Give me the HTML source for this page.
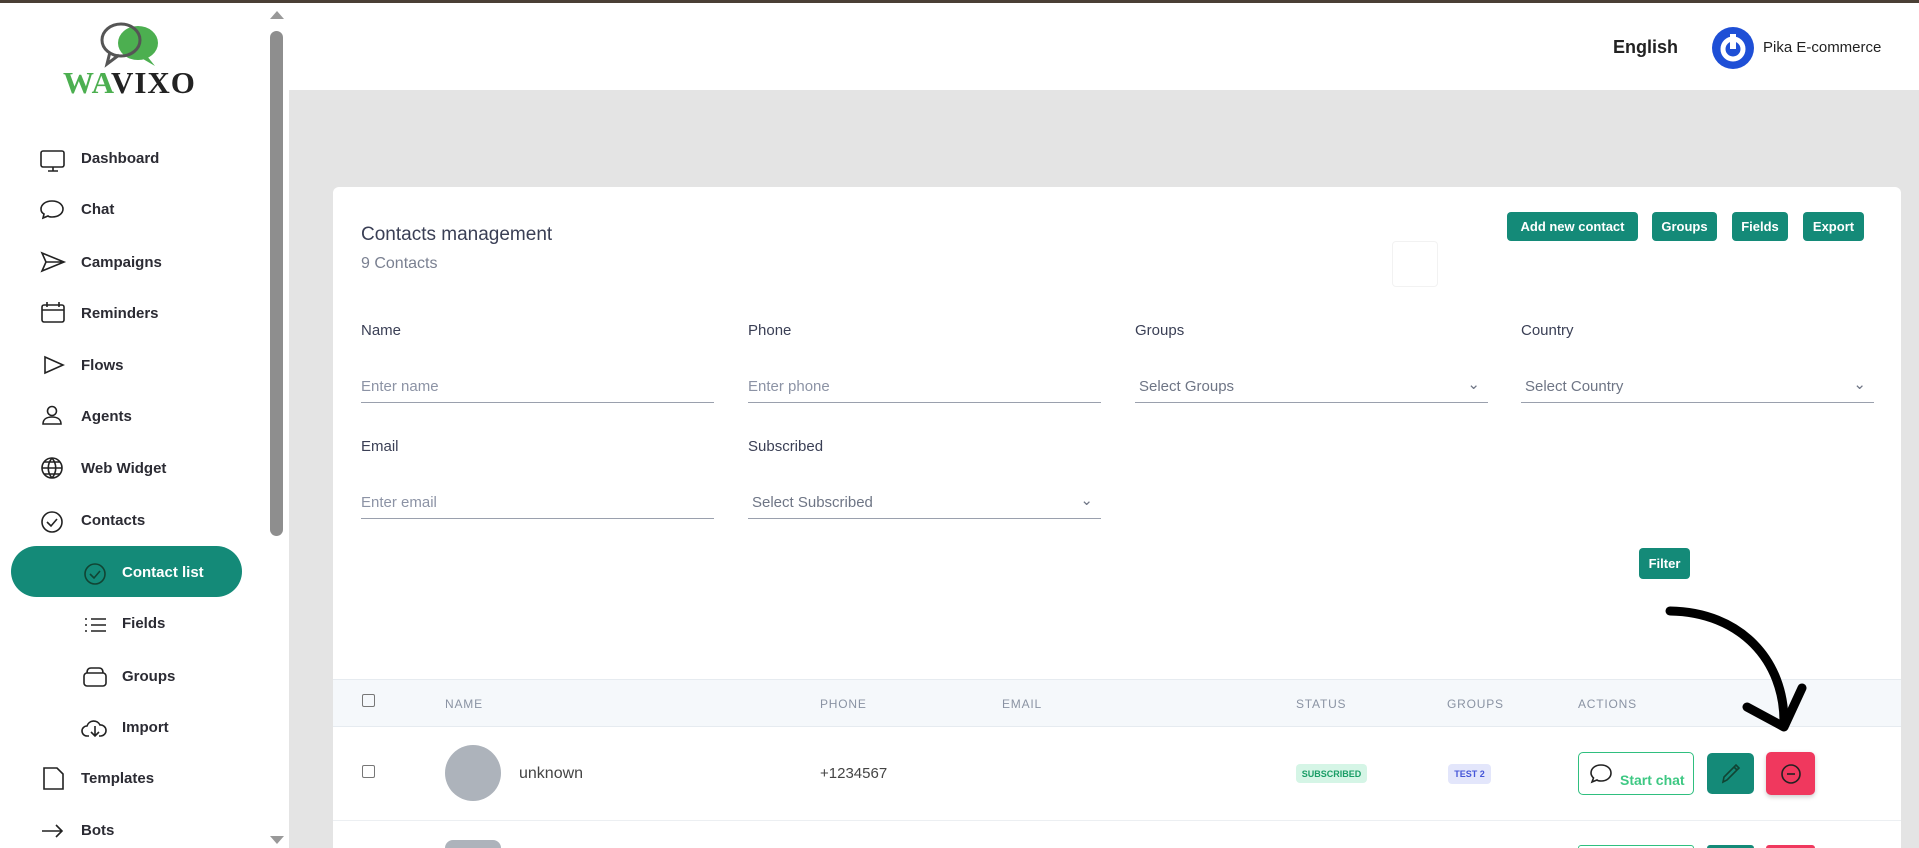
<!DOCTYPE html>
<html style="width:1919px;height:848px;overflow:hidden"><head><meta charset="utf-8"><style>
*{box-sizing:border-box;margin:0;padding:0}
body{width:1919px;height:848px;overflow:hidden;font-family:"Liberation Sans",sans-serif;background:#e4e4e4;position:relative;color:#222}
.abs{position:absolute}
#top{left:0;top:0;width:1919px;height:3px;background:#4a3f35}
#side{left:0;top:3px;width:289px;height:845px;background:#fff}
.nav{position:absolute;font-weight:bold;font-size:15px;color:#2b2b33;white-space:nowrap}
#hdr{left:289px;top:3px;width:1630px;height:87px;background:#fff}
#card{left:333px;top:187px;width:1568px;height:661px;background:#fff;border-radius:6px 6px 0 0}
.btn{position:absolute;background:#148a78;color:#fff;font-size:13px;font-weight:bold;border-radius:4px;display:flex;align-items:center;justify-content:center}
.lbl{position:absolute;font-size:15px;color:#3a3f55}
.inp{position:absolute;font-size:15px;color:#8c93a5;width:353px;border-bottom:1px solid #9aa0ad;height:25px}
.th{position:absolute;top:697px;font-size:12px;color:#8a93a3;letter-spacing:.8px}
</style></head><body>
<div id="top" class="abs"></div>
<div id="side" class="abs">
<svg class="abs" style="left:95px;top:17px" width="70" height="52" viewBox="0 0 70 52"><ellipse cx="43" cy="23" rx="20" ry="17" fill="#4caf50"/><path d="M52 36 L60 46 L48 39Z" fill="#4caf50"/><ellipse cx="26" cy="20" rx="19" ry="16" fill="none" stroke="#555" stroke-width="3"/><path d="M15 32 L12 44 L24 35" fill="none" stroke="#555" stroke-width="3"/></svg>
<div class="abs" style="left:63px;top:62px;font-family:'Liberation Serif',serif;font-weight:bold;font-size:31px;letter-spacing:1px"><span style="color:#4caf50">WA</span><span style="color:#222">VIXO</span></div>
<div class="abs" style="left:270px;top:28px;width:13px;height:505px;background:#8e8e8e;border-radius:7px"></div>
<div class="abs" style="left:270px;top:8px;width:0;height:0;border-left:7px solid transparent;border-right:7px solid transparent;border-bottom:8px solid #999"></div>
<div class="abs" style="left:270px;top:833px;width:0;height:0;border-left:7px solid transparent;border-right:7px solid transparent;border-top:8px solid #999"></div>
<div class="abs" style="left:11px;top:543px;width:231px;height:51px;background:#148a78;border-radius:26px"></div>
</div>
<svg class="abs" style="left:0;top:0" width="289" height="848" fill="none" stroke="#222" stroke-width="1.6">
<rect x="41" y="151" width="23" height="16" rx="2"/><path d="M48 171h10M53 167v4"/>
<path d="M52 201c7 0 11 4 11 8s-4 8-11 8c-2 0-3 0-4-1l-5 2 1-4c-2-1-3-3-3-5 0-4 4-8 11-8z"/>
<path d="M42 253l22 9-22 9 4-9z M46 262h18"/>
<rect x="42" y="305" width="22" height="17" rx="2"/><path d="M42 310h22M47 302v5M59 302v5"/>
<path d="M45 357l18 8-18 8z"/>
<circle cx="52" cy="411" r="4.5"/><path d="M43 424c0-5 4-7 9-7s9 2 9 7z"/>
<circle cx="52" cy="468" r="10"/><path d="M42 468h20M52 458c-5 6-5 14 0 20M52 458c5 6 5 14 0 20M44 462h16M44 474h16"/>
<circle cx="52" cy="522" r="10"/><path d="M47 522l4 4 6-7"/>
<circle cx="95" cy="574" r="10" stroke="#143" /><path d="M90 574l4 4 6-7" stroke="#143"/>
<path d="M85 619h2M85 625h2M85 631h2M91 619h15M91 625h15M91 631h15"/>
<rect x="84" y="673" width="22" height="13" rx="3"/><path d="M87 673c0-3 1-5 4-5h8c3 0 4 2 4 5"/>
<path d="M89 736h-2a5 5 0 0 1 0-10 7 7 0 0 1 13-1 5 5 0 0 1 1 11h-2M95 726v10M91 732l4 4 4-4"/>
<path d="M44 768h13l6 6v15h-19z"/>
<path d="M42 831h20M56 825l6 6-6 6"/>
</svg>
<div class="nav" style="left:81px;top:150px">Dashboard</div>
<div class="nav" style="left:81px;top:201px">Chat</div>
<div class="nav" style="left:81px;top:254px">Campaigns</div>
<div class="nav" style="left:81px;top:305px">Reminders</div>
<div class="nav" style="left:81px;top:357px">Flows</div>
<div class="nav" style="left:81px;top:408px">Agents</div>
<div class="nav" style="left:81px;top:460px">Web Widget</div>
<div class="nav" style="left:81px;top:512px">Contacts</div>
<div class="nav" style="left:122px;top:564px;color:#fff">Contact list</div>
<div class="nav" style="left:122px;top:615px">Fields</div>
<div class="nav" style="left:122px;top:668px">Groups</div>
<div class="nav" style="left:122px;top:719px">Import</div>
<div class="nav" style="left:81px;top:770px">Templates</div>
<div class="nav" style="left:81px;top:822px">Bots</div>

<div id="hdr" class="abs"></div>
<div class="abs" style="left:1613px;top:37px;font-size:18px;font-weight:bold;color:#222">English</div>
<svg class="abs" style="left:1712px;top:27px" width="42" height="42" viewBox="0 0 42 42"><circle cx="21" cy="21" r="21" fill="#1e4fd6"/><circle cx="21" cy="22" r="10" fill="none" stroke="#fff" stroke-width="5"/><rect x="18" y="7" width="6" height="15" fill="#fff"/></svg>
<div class="abs" style="left:1763px;top:39px;font-size:15px;color:#222">Pika E-commerce</div>

<div id="card" class="abs"></div>
<div class="abs" style="left:361px;top:224px;font-size:19px;color:#3a3f55">Contacts management</div>
<div class="abs" style="left:361px;top:255px;font-size:16px;color:#7a8091">9 Contacts</div>
<div class="abs" style="left:1392px;top:241px;width:46px;height:46px;border:1px solid #f2f2f2;border-radius:4px"></div>
<div class="btn" style="left:1507px;top:212px;width:131px;height:29px">Add new contact</div>
<div class="btn" style="left:1652px;top:212px;width:65px;height:29px">Groups</div>
<div class="btn" style="left:1732px;top:212px;width:56px;height:29px">Fields</div>
<div class="btn" style="left:1803px;top:212px;width:61px;height:29px">Export</div>

<div class="lbl" style="left:361px;top:322px">Name</div>
<div class="lbl" style="left:748px;top:322px">Phone</div>
<div class="lbl" style="left:1135px;top:322px">Groups</div>
<div class="lbl" style="left:1521px;top:322px">Country</div>
<div class="inp" style="left:361px;top:378px">Enter name</div>
<div class="inp" style="left:748px;top:378px">Enter phone</div>
<div class="inp" style="left:1135px;top:378px;padding-left:4px;color:#6e7585">Select Groups<span style="position:absolute;right:8px;top:-3px">⌄</span></div>
<div class="inp" style="left:1521px;top:378px;padding-left:4px;color:#6e7585">Select Country<span style="position:absolute;right:8px;top:-3px">⌄</span></div>
<div class="lbl" style="left:361px;top:438px">Email</div>
<div class="lbl" style="left:748px;top:438px">Subscribed</div>
<div class="inp" style="left:361px;top:494px">Enter email</div>
<div class="inp" style="left:748px;top:494px;padding-left:4px;color:#6e7585">Select Subscribed<span style="position:absolute;right:8px;top:-3px">⌄</span></div>
<div class="btn" style="left:1639px;top:548px;width:51px;height:31px">Filter</div>

<div class="abs" style="left:333px;top:679px;width:1568px;height:48px;background:#f5f8fb;border-top:1px solid #e6ebf0;border-bottom:1px solid #e6ebf0"></div>
<div class="abs" style="left:362px;top:694px;width:13px;height:13px;border:1px solid #777;border-radius:2px"></div>
<div class="th" style="left:445px">NAME</div>
<div class="th" style="left:820px">PHONE</div>
<div class="th" style="left:1002px">EMAIL</div>
<div class="th" style="left:1296px">STATUS</div>
<div class="th" style="left:1447px">GROUPS</div>
<div class="th" style="left:1578px">ACTIONS</div>

<div class="abs" style="left:362px;top:765px;width:13px;height:13px;border:1px solid #777;border-radius:2px"></div>
<div class="abs" style="left:445px;top:745px;width:56px;height:56px;border-radius:50%;background:#adb3bb"></div>
<div class="abs" style="left:519px;top:765px;font-size:16px;color:#444">unknown</div>
<div class="abs" style="left:820px;top:765px;font-size:15px;color:#444">+1234567</div>
<div class="abs" style="left:1296px;top:764px;width:71px;height:19px;background:#d5f5e6;color:#1a9d66;font-size:9px;font-weight:bold;border-radius:4px;display:flex;align-items:center;justify-content:center">SUBSCRIBED</div>
<div class="abs" style="left:1448px;top:764px;width:43px;height:20px;background:#e3e6fb;color:#4656d8;font-size:9px;font-weight:bold;border-radius:4px;display:flex;align-items:center;justify-content:center">TEST 2</div>
<div class="abs" style="left:333px;top:820px;width:1568px;height:1px;background:#eceff2"></div>
<div class="abs" style="left:445px;top:840px;width:56px;height:8px;border-radius:28px 28px 0 0;background:#adb3bb"></div>

<div class="abs" style="left:1578px;top:752px;width:116px;height:43px;border:1px solid #2fbf7f;border-radius:5px"></div>
<svg class="abs" style="left:1589px;top:762px" width="24" height="24" fill="none" stroke="#222" stroke-width="1.6"><path d="M12 3c6 0 10 3.5 10 8s-4 8-10 8c-1.5 0-3 0-4-1l-5 2 1.5-4C3 14.5 2 13 2 11c0-4.5 4-8 10-8z"/></svg>
<div class="abs" style="left:1620px;top:772px;font-size:14px;font-weight:bold;color:#3ec883">Start chat</div>
<div class="abs" style="left:1707px;top:753px;width:47px;height:41px;background:#148a78;border-radius:5px"></div>
<svg class="abs" style="left:1719px;top:762px" width="24" height="24" fill="none" stroke="#143" stroke-width="1.6"><path d="M4 20l1-5L17 3l3 3L8 18zM15 5l3 3"/></svg>
<div class="abs" style="left:1766px;top:752px;width:49px;height:43px;background:#f0385e;border-radius:5px;box-shadow:0 2px 5px rgba(0,0,0,.2)"></div>
<svg class="abs" style="left:1779px;top:762px" width="24" height="24" fill="none" stroke="#222" stroke-width="1.6"><circle cx="12" cy="12" r="9"/><path d="M8 12h8"/></svg>
<div class="abs" style="left:1578px;top:845px;width:116px;height:3px;border:1px solid #2fbf7f;border-bottom:0;border-radius:5px 5px 0 0"></div>
<div class="abs" style="left:1707px;top:845px;width:47px;height:3px;background:#148a78;border-radius:5px 5px 0 0"></div>
<div class="abs" style="left:1766px;top:845px;width:49px;height:3px;background:#f0385e;border-radius:5px 5px 0 0"></div>

<svg class="abs" style="left:0;top:0" width="1919" height="848" fill="none" stroke="#000" stroke-width="9" stroke-linecap="round" stroke-linejoin="round"><path d="M1670 611C1740 612 1785 660 1784 724"/><path d="M1747 707L1784 727 1802 688"/></svg>
</body></html>
